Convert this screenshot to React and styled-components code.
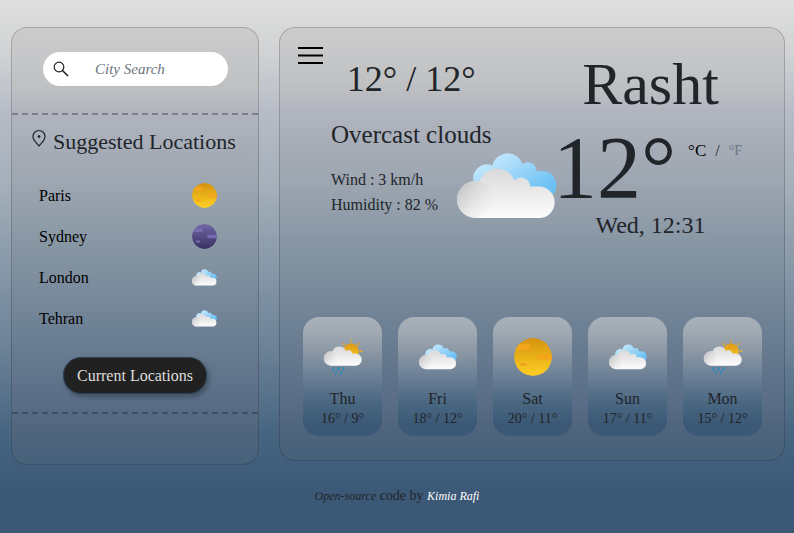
import React, { useId, useState } from "react";
import styled, { createGlobalStyle } from "styled-components";

const GlobalStyle = createGlobalStyle`
  * { box-sizing: border-box; }
  body {
    margin: 0;
    min-height: 100vh;
    color: #212529;
    font-family: "Liberation Serif", serif;
    font-size: 16px;
    line-height: 24px;
    background: linear-gradient(to bottom, #dededd 0%, #d0d2d4 10%, #b7bcc7 21%, #a5b0ba 34%, #8798a9 50%, #6f8499 64%, #456480 82%, #3b5876 93%, #3b5876 100%) no-repeat;
    background-size: 100% 100vh;
    background-color: #3b5876;
  }
  button, input { font: inherit; }
`;

const Layout = styled.main`
  display: grid;
  grid-template-columns: minmax(0, 248fr) minmax(0, 506fr);
  gap: 20px;
  align-items: start;
  padding: 27px 9px 0 11px;
`;

const Panel = styled.section`
  border: 1px solid rgba(0, 0, 0, 0.18);
  border-radius: 16px;
  background: linear-gradient(to bottom, #cccccd 0%, #bfc1c3 13%, #b0b4be 20%, #9ca5b0 36%, #8695a3 51%, #6b7e92 71%, #586c86 87%, #50657e 92%, #46617a 100%) border-box;
`;

const SearchForm = styled.form`
  padding: 24px 30px 27px 31px;
  border-bottom: 2px dashed rgba(33, 37, 41, 0.36);
`;

const SearchBox = styled.label`
  display: flex;
  align-items: center;
  height: 34px;
  padding: 0 16px 0 10px;
  border-radius: 17px;
  background: #fff;
`;

const SearchInput = styled.input`
  flex: 1;
  min-width: 0;
  height: 30px;
  padding: 0 0 0 26px;
  border: 0;
  outline: 0;
  background: transparent;
  font-size: 15px;
  font-style: italic;
  &::placeholder { color: #6c757d; opacity: 1; }
`;

const Suggested = styled.div`
  padding: 11px 20px 18px;
  border-bottom: 2px dashed rgba(33, 37, 41, 0.4);
  text-align: center;
`;

const SuggestedTitle = styled.h2`
  display: flex;
  gap: 7px;
  margin: 0;
  font-size: 22px;
  line-height: 32px;
  font-weight: 400;
  white-space: nowrap;
`;

const Places = styled.ul`
  display: grid;
  gap: 16px;
  margin: 25px 0 26px;
  padding: 0 21px 0 7px;
  list-style: none;
`;

const Place = styled.li`
  display: flex;
  align-items: center;
  justify-content: space-between;
  height: 25px;
`;

const PlaceButton = styled.button`
  padding: 0;
  border: 0;
  background: none;
  color: #000;
  cursor: pointer;
`;

const CurrentButton = styled.button`
  padding: 5px 13px;
  border: 1px solid #294158;
  border-radius: 18px;
  background: #212121;
  color: #dededd;
  line-height: 25px;
  box-shadow: 2px 3px 5px rgba(0, 0, 0, 0.3);
  cursor: pointer;
`;

const PanelEnd = styled.div`
  height: 50px;
`;

const Overview = styled.div`
  display: flex;
  align-items: flex-start;
  padding: 0 40px 0 18px;
`;

const MenuButton = styled.button`
  display: flex;
  flex: none;
  margin: 19px 8px 0 0;
  padding: 0;
  border: 0;
  background: none;
  cursor: pointer;
`;

const Conditions = styled.div`
  flex: 226 1 0;
  min-width: 0;
  padding-top: 29px;
`;

const Summary = styled.div`
  width: fit-content;
  text-align: center;
`;

const HighLow = styled.p`
  margin: 0;
  font-size: 36px;
  line-height: 44px;
`;

const Description = styled.p`
  margin: 19px 0 3px;
  font-size: 25px;
  line-height: 30px;
  white-space: nowrap;
`;

const Measures = styled.div`
  display: flex;
  align-items: flex-end;
  justify-content: space-between;
`;

const MeasureList = styled.ul`
  margin: 0;
  padding: 0 0 2px;
  list-style: none;
  line-height: 25px;
  white-space: nowrap;
`;

const Current = styled.div`
  flex: 187 1 0;
  min-width: 0;
  padding-top: 20px;
  text-align: center;
`;

const City = styled.h1`
  margin: 0;
  font-size: 60px;
  line-height: 72px;
  font-weight: 400;
`;

const Reading = styled.div`
  display: flex;
  justify-content: center;
  margin-top: 8px;
  white-space: nowrap;
`;

const Degrees = styled.span`
  font-size: 88px;
  line-height: 80px;
`;

const Units = styled.span`
  display: flex;
  gap: 9px;
  margin: 11px 6px 0 12px;
`;

const UnitButton = styled.button`
  padding: 0;
  border: 0;
  background: none;
  color: ${(p) => (p.$active ? "#000" : "#6b747e")};
  font-size: ${(p) => (p.$active ? 17 : 14)}px;
  line-height: 24px;
  height: 24px;
  cursor: pointer;
`;

const Clock = styled.p`
  margin: 2px 0 0;
  font-size: 24px;
  line-height: 30px;
`;

const Forecast = styled.ul`
  display: grid;
  grid-template-columns: repeat(5, 1fr);
  gap: 16px;
  margin: 77px 0 0;
  padding: 0 22px 24px 23px;
  list-style: none;
`;

const Day = styled.li`
  display: flex;
  flex-direction: column;
  align-items: center;
  padding: 21px 0 7px;
  border-radius: 16px;
  background: linear-gradient(to bottom, #a8b0b8 0%, #a1aab3 12%, #8794a2 32%, #647a92 55%, #4a6782 72%, #3b5876 90%);
  line-height: 20px;
`;

const DayName = styled.span`
  margin-top: 13px;
`;

const DayRange = styled.span`
  font-size: 14px;
`;

const Footer = styled.footer`
  padding: 19px 0 24px;
  text-align: center;
  font-size: 14px;
`;

const FooterLink = styled.a`
  color: ${(p) => (p.$light ? "#fff" : "#212529")};
  font-size: 12px;
  font-style: italic;
  text-decoration: none;
`;

function CloudDefs({ id }) {
  return (
    <defs>
      <linearGradient id={`${id}f`} x1="0" y1="14" x2="0" y2="65" gradientUnits="userSpaceOnUse">
        <stop offset="0" stopColor="#d8d8da" />
        <stop offset="1" stopColor="#fdfdfd" />
      </linearGradient>
      <linearGradient id={`${id}l`} x1="5" y1="34" x2="34" y2="56" gradientUnits="userSpaceOnUse">
        <stop offset="0" stopColor="#c9c9cb" />
        <stop offset="1" stopColor="#f0f0f0" stopOpacity="0.3" />
      </linearGradient>
      <linearGradient id={`${id}b`} x1="40" y1="0" x2="70" y2="48" gradientUnits="userSpaceOnUse">
        <stop offset="0" stopColor="#c4e8fd" />
        <stop offset="1" stopColor="#6bc0f3" />
      </linearGradient>
    </defs>
  );
}

function FrontCloud({ id }) {
  return (
    <g>
      <path
        fill={`url(#${id}f)`}
        d="M18.5 65A18.5 18.5 0 0 1 18.5 28Q21 28 22.500 28.300A18.500 18.500 0 0 1 57.500 27.500A9 9 0 0 1 73 33.600H82A15.700 15.700 0 0 1 82 65Z"
      />
      <circle cx="18.500" cy="46.500" r="18.500" fill={`url(#${id}l)`} />
    </g>
  );
}

function CloudsIcon({ width, height }) {
  const id = useId();
  return (
    <svg width={width} height={height} viewBox="0 0 100 66" role="img" aria-label="Clouds">
      <CloudDefs id={id} />
      <path
        fill={`url(#${id}b)`}
        d="M17 30A14 14 0 0 1 35.500 12.500A15.500 15.500 0 0 1 65.500 11.500A8 8 0 0 1 79 18H86A14 14 0 0 1 95 42V50H30Z"
      />
      <FrontCloud id={id} />
    </svg>
  );
}

function RainIcon({ size }) {
  const id = useId();
  return (
    <svg width={size} height={size} viewBox="0 -2 38 38" overflow="visible" role="img" aria-label="Rain">
      <CloudDefs id={id} />
      <linearGradient id={`${id}s`} x1="0" y1="0" x2="0" y2="1">
        <stop offset="0" stopColor="#dc9a18" />
        <stop offset="1" stopColor="#fbc827" />
      </linearGradient>
      <circle cx="27" cy="11.500" r="8" fill={`url(#${id}s)`} />
      <path
        stroke="#e8a726"
        strokeWidth="1.400"
        strokeLinecap="round"
        d="M27 .3V2M19 3.500L20.300 4.900M35 3.500L33.700 4.900M36.300 11.200H38"
      />
      <g transform="translate(-.2 .5) scale(.388)">
        <FrontCloud id={id} />
      </g>
      <path
        stroke="#2e89bd"
        strokeWidth="2"
        strokeLinecap="round"
        d="M9.500 28L9.300 30M14.500 28L14.300 30M19.500 28L19.300 30M12 32.500L11.800 33.500M17 32.500L16.800 33.500"
      />
    </svg>
  );
}

function OrbIcon({ size, night }) {
  const id = useId();
  return (
    <svg width={size} height={size} viewBox="0 0 114 114" role="img" aria-label={night ? "Clear night" : "Sunny"}>
      <linearGradient id={id} x1="0" y1="0" x2="0" y2="1">
        <stop offset="0" stopColor={night ? "#7067a8" : "#d4920f"} />
        <stop offset="1" stopColor={night ? "#38305f" : "#ffd023"} />
      </linearGradient>
      <clipPath id={`${id}c`}>
        <circle cx="57" cy="57" r="57" />
      </clipPath>
      <g clipPath={`url(#${id}c)`}>
        <circle cx="57" cy="57" r="57" fill={`url(#${id})`} />
        <g fill={night ? "#776bb2" : "#f3a51b"}>
          <rect x="-10" y="18" width="59" height="18" rx="9" />
          <rect x="69" y="49" width="60" height="16" rx="8" />
          <rect x="18" y="75" width="20" height="9" rx="4.500" />
        </g>
      </g>
    </svg>
  );
}

function WeatherIcon({ kind, size }) {
  if (kind === "rain") return <RainIcon size={size} />;
  if (kind === "clouds") return <CloudsIcon width={size} height={size} />;
  return <OrbIcon size={size} night={kind === "night"} />;
}

const places = [
  { name: "Paris", kind: "sun" },
  { name: "Sydney", kind: "night" },
  { name: "London", kind: "clouds" },
  { name: "Tehran", kind: "clouds" },
];

const days = [
  { name: "Thu", range: "16° / 9°", kind: "rain" },
  { name: "Fri", range: "18° / 12°", kind: "clouds" },
  { name: "Sat", range: "20° / 11°", kind: "sun" },
  { name: "Sun", range: "17° / 11°", kind: "clouds" },
  { name: "Mon", range: "15° / 12°", kind: "rain" },
];

export default function App() {
  const [unit, setUnit] = useState("C");
  return (
    <>
      <GlobalStyle />
      <Layout>
        <Panel>
          <SearchForm onSubmit={(e) => e.preventDefault()}>
            <SearchBox>
              <svg width="16" height="16" viewBox="0 0 16 16" fill="none" stroke="#212121" aria-hidden="true">
                <circle cx="6" cy="6" r="4.800" strokeWidth="1.200" />
                <path d="M9.500 9.500L15 15" strokeWidth="1.600" />
              </svg>
              <SearchInput type="search" placeholder="City Search" aria-label="City Search" />
            </SearchBox>
          </SearchForm>
          <Suggested>
            <SuggestedTitle>
              <svg width="14" height="22" viewBox="0 0 14 22" fill="none" stroke="#212529" aria-hidden="true">
                <path d="M7 20C5 17.500 1 14.500 1 10.500A6 6 0 0 1 13 10.500C13 14.500 9 17.500 7 20Z" strokeWidth="1.200" />
                <circle cx="7" cy="10.500" r="1" fill="#212529" />
              </svg>
              Suggested Locations
            </SuggestedTitle>
            <Places>
              {places.map((p) => (
                <Place key={p.name}>
                  <PlaceButton type="button">{p.name}</PlaceButton>
                  <WeatherIcon kind={p.kind} size={25} />
                </Place>
              ))}
            </Places>
            <CurrentButton type="button">Current Locations</CurrentButton>
          </Suggested>
          <PanelEnd />
        </Panel>

        <Panel>
          <Overview>
            <MenuButton type="button" aria-label="Menu">
              <svg width="25" height="17" viewBox="0 0 25 17" stroke="#000" strokeWidth="2" aria-hidden="true">
                <path d="M0 1H25M0 8.500H25M0 16H25" />
              </svg>
            </MenuButton>
            <Conditions>
              <Summary>
                <HighLow>12° / 12°</HighLow>
                <Description>Overcast clouds</Description>
              </Summary>
              <Measures>
                <MeasureList>
                  <li>Wind : 3 km/h</li>
                  <li>Humidity : 82 %</li>
                </MeasureList>
                <CloudsIcon width={100} height={66} />
              </Measures>
            </Conditions>
            <Current>
              <City>Rasht</City>
              <Reading>
                <Degrees>12°</Degrees>
                <Units>
                  <UnitButton type="button" $active={unit === "C"} onClick={() => setUnit("C")}>°C</UnitButton>
                  <span>/</span>
                  <UnitButton type="button" $active={unit === "F"} onClick={() => setUnit("F")}>°F</UnitButton>
                </Units>
              </Reading>
              <Clock>Wed, 12:31</Clock>
            </Current>
          </Overview>
          <Forecast>
            {days.map((d) => (
              <Day key={d.name}>
                <WeatherIcon kind={d.kind} size={38} />
                <DayName>{d.name}</DayName>
                <DayRange>{d.range}</DayRange>
              </Day>
            ))}
          </Forecast>
        </Panel>
      </Layout>
      <Footer>
        <FooterLink href="#source">Open-source</FooterLink> code by{" "}
        <FooterLink href="#author" $light>Kimia Rafi</FooterLink>
      </Footer>
    </>
  );
}
